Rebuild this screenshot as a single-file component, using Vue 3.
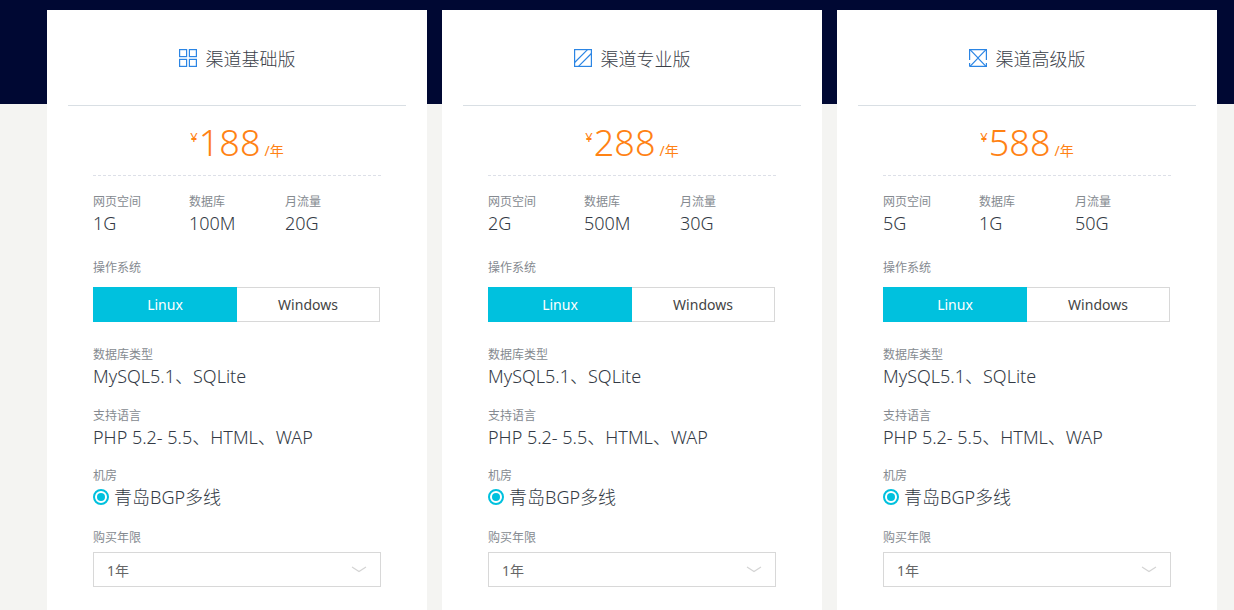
<template>
  <div class="page">
    <div class="band"></div>
    <div class="cards">
      <div v-for="plan in plans" :key="plan.name" class="card">
        <div class="card-head">
          <svg class="head-icon" width="18" height="18" viewBox="0 0 18 18" fill="none" stroke="#2b85e4" stroke-width="1.2">
            <template v-if="plan.icon === 'grid'">
              <rect x="0.6" y="0.6" width="7" height="7" />
              <rect x="10.4" y="0.6" width="7" height="7" />
              <rect x="0.6" y="10.4" width="7" height="7" />
              <rect x="10.4" y="10.4" width="7" height="7" />
            </template>
            <template v-else-if="plan.icon === 'slash'">
              <rect x="0.6" y="0.6" width="16.8" height="16.8" />
              <path d="M0.6 13.5L13.5 0.6M4.5 17.4L17.4 4.5" />
            </template>
            <template v-else>
              <path d="M0.6 11V0.6H17.4V11M0.6 17.4H17.4V14" />
              <path d="M1 0.6L9 9L17 0.6M1 17.4L9 9L17 17.4" />
              <path d="M0.6 14V17.4" />
            </template>
          </svg>
          <span class="head-name">{{ plan.name }}</span>
        </div>

        <div class="price">
          <span class="yen">¥</span>
          <span class="amount">{{ plan.price }}</span>
          <span class="unit">/年</span>
        </div>

        <div class="body">
          <div class="specs">
            <div v-for="spec in plan.specs" :key="spec.label" class="spec">
              <div class="label">{{ spec.label }}</div>
              <div class="value">{{ spec.value }}</div>
            </div>
          </div>

          <div class="label os-label">操作系统</div>
          <div class="os">
            <div class="os-btn active">Linux</div>
            <div class="os-btn">Windows</div>
          </div>

          <div class="label db-label">数据库类型</div>
          <div class="value">MySQL5.1、SQLite</div>

          <div class="label lang-label">支持语言</div>
          <div class="value">PHP 5.2- 5.5、HTML、WAP</div>

          <div class="label room-label">机房</div>
          <div class="room">
            <span class="radio"><i></i></span>
            <span class="value">青岛BGP多线</span>
          </div>

          <div class="label year-label">购买年限</div>
          <div class="select">
            <span>1年</span>
            <svg width="16" height="7" viewBox="0 0 16 7" fill="none" stroke="#d4d4d4" stroke-width="1.2">
              <path d="M1 1L8 5.5L15 1" />
            </svg>
          </div>
        </div>
      </div>
    </div>
  </div>
</template>

<script setup>
const plans = [
  {
    name: '渠道基础版',
    icon: 'grid',
    price: 188,
    specs: [
      { label: '网页空间', value: '1G' },
      { label: '数据库', value: '100M' },
      { label: '月流量', value: '20G' }
    ]
  },
  {
    name: '渠道专业版',
    icon: 'slash',
    price: 288,
    specs: [
      { label: '网页空间', value: '2G' },
      { label: '数据库', value: '500M' },
      { label: '月流量', value: '30G' }
    ]
  },
  {
    name: '渠道高级版',
    icon: 'cross',
    price: 588,
    specs: [
      { label: '网页空间', value: '5G' },
      { label: '数据库', value: '1G' },
      { label: '月流量', value: '50G' }
    ]
  }
];
</script>

<style>
html,
body {
  margin: 0;
  background: #f4f4f2;
}
</style>

<style scoped>
.page {
  position: relative;
  height: 610px;
  overflow: hidden;
  background: #f4f4f2;
  font-family: "Noto Sans", "Noto Sans CJK SC", sans-serif;
  color: #333a45;
}

.band {
  position: absolute;
  top: 0;
  left: 0;
  right: 0;
  height: 104px;
  background: #000833;
}

.cards {
  position: relative;
  display: flex;
  gap: 15px;
  padding: 10px 0 0 47px;
}

.card {
  width: 380px;
  height: 640px;
  flex-shrink: 0;
  background: #fff;
}

.card-head {
  display: flex;
  align-items: center;
  justify-content: center;
  height: 95px;
  margin: 0 21px;
  border-bottom: 1px solid #d9dfe4;
  box-sizing: content-box;
}

.head-icon {
  margin-right: 9px;
}

.head-name {
  font-size: 18px;
  font-weight: 300;
  color: #3a4048;
}

.price {
  display: flex;
  align-items: baseline;
  justify-content: center;
  height: 69px;
  margin: 0 46px;
  border-bottom: 1px dashed #dde0e8;
  color: #ff8214;
  line-height: 74px;
}

.yen {
  align-self: flex-start;
  font-size: 13px;
  line-height: 62px;
  margin-right: 1px;
}

.amount {
  font-size: 36px;
  font-family: "Noto Sans", sans-serif;
  font-weight: 300;
}

.unit {
  font-size: 14px;
  margin-left: 4px;
}

.body {
  padding: 18px 46px 0;
}

.specs {
  display: flex;
}

.spec {
  width: 102.5px;
}

.label {
  font-size: 12px;
  line-height: 16px;
  color: #858a90;
}

.value {
  font-size: 18px;
  line-height: 26px;
  font-weight: 300;
  color: #333a45;
}

.os-label {
  margin-top: 24px;
}

.os {
  display: flex;
  width: 287px;
  height: 35px;
  margin-top: 11px;
}

.os-btn {
  flex: 1;
  display: flex;
  align-items: center;
  justify-content: center;
  border: 1px solid #d8d8d8;
  border-left: none;
  font-size: 14px;
  color: #444;
}

.os-btn.active {
  flex: none;
  width: 144px;
  border: none;
  background: #00c1de;
  color: #fff;
}

.db-label {
  margin-top: 25px;
}

.lang-label {
  margin-top: 19px;
}

.room-label {
  margin-top: 18px;
}

.room {
  display: flex;
  align-items: center;
  gap: 5px;
}

.radio {
  display: flex;
  align-items: center;
  justify-content: center;
  width: 16px;
  height: 16px;
  box-sizing: border-box;
  border: 2px solid #00c1de;
  border-radius: 50%;
}

.radio i {
  width: 8px;
  height: 8px;
  border-radius: 50%;
  background: #00c1de;
}

.year-label {
  margin-top: 20px;
}

.select {
  display: flex;
  align-items: center;
  justify-content: space-between;
  box-sizing: border-box;
  width: 288px;
  height: 35px;
  margin-top: 6px;
  padding: 0 13px;
  border: 1px solid #d8d8d8;
  font-size: 14px;
  color: #666;
}
</style>
